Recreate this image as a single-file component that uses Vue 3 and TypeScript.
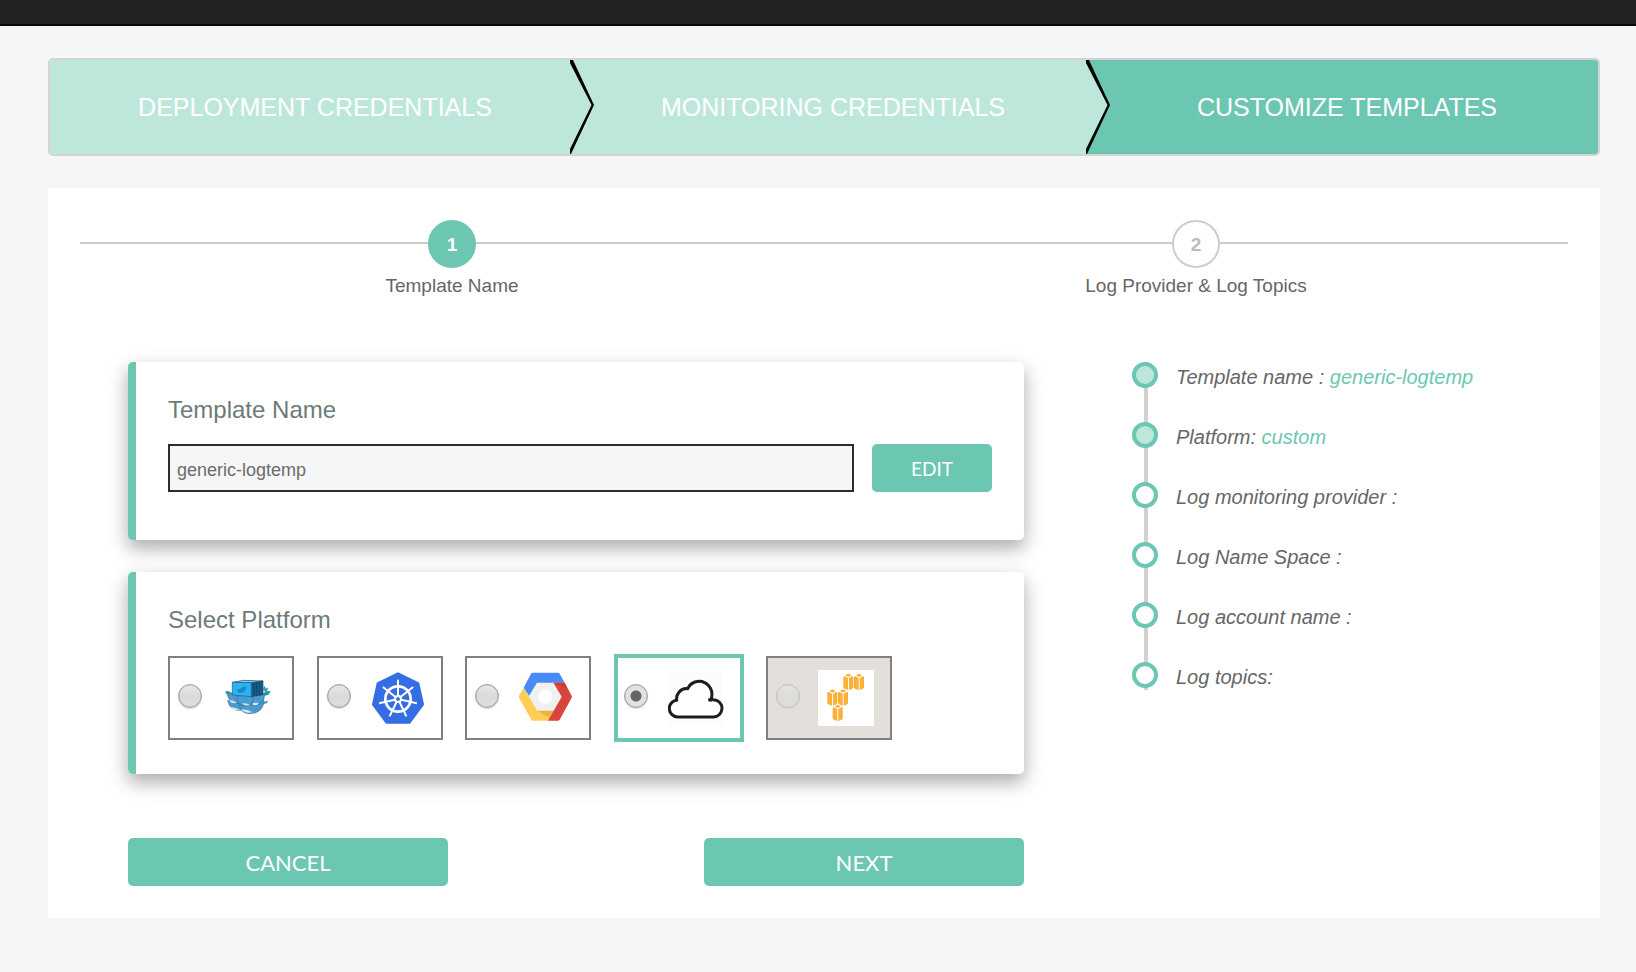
<script setup lang="ts">
import { computed, ref } from 'vue'

type PlatformId = 'swarm' | 'kubernetes' | 'gcp' | 'custom' | 'aws'

interface Platform {
  id: PlatformId
  label: string
  disabled?: boolean
}

const stages: string[] = ['Deployment Credentials', 'Monitoring Credentials', 'Customize Templates']
const activeStage = 2

const steps: string[] = ['Template Name', 'Log Provider & Log Topics']
const activeStep = ref(0)

const templateName = ref('generic-logtemp')
const editing = ref(false)

const platforms: Platform[] = [
  { id: 'swarm', label: 'Docker Swarm' },
  { id: 'kubernetes', label: 'Kubernetes' },
  { id: 'gcp', label: 'Google Cloud' },
  { id: 'custom', label: 'Custom' },
  { id: 'aws', label: 'AWS', disabled: true },
]
const platform = ref<PlatformId>('custom')

const spokes: number[] = Array.from({ length: 7 }, (_, i) => (i * 360) / 7)
const cubes: [number, number][] = [
  [325, 101],
  [357, 101],
  [277, 148],
  [309, 148],
  [293, 194],
]

const summary = computed(() => [
  { label: 'Template name :', value: templateName.value },
  { label: 'Platform:', value: platform.value },
  { label: 'Log monitoring provider :', value: '' },
  { label: 'Log Name Space :', value: '' },
  { label: 'Log account name :', value: '' },
  { label: 'Log topics:', value: '' },
])
</script>

<template>
  <div class="page">
    <header class="topbar"></header>
    <main class="main">
      <nav class="wizard" aria-label="Setup stages">
        <div v-for="(stage, i) in stages" :key="stage" class="stage" :class="{ active: i === activeStage }">
          <svg v-if="i > 0" class="chevron" viewBox="0 0 24 94" preserveAspectRatio="none" aria-hidden="true">
            <path class="chevron-fill" d="M0 0 L23 45 L0 94 Z" />
            <path d="M0 0 H3 L24 45 L1 94 H0 V89 L21.500 45 L0 3 Z" />
          </svg>
          <span>{{ stage }}</span>
        </div>
      </nav>

      <section class="panel">
        <ol class="stepper">
          <li v-for="(step, i) in steps" :key="step" :class="{ current: i === activeStep }">
            <span class="bullet">{{ i + 1 }}</span>
            <span class="step-label">{{ step }}</span>
          </li>
        </ol>

        <div class="content">
          <form class="form" @submit.prevent="activeStep = 1">
            <div class="card card-name">
              <label class="title" for="template-name">Template Name</label>
              <div class="name-row">
                <input id="template-name" v-model="templateName" type="text" :readonly="!editing" />
                <button type="button" class="button small" @click="editing = !editing">EDIT</button>
              </div>
            </div>

            <fieldset class="card">
              <legend class="title">Select Platform</legend>
              <div class="platforms">
                <label
                  v-for="p in platforms"
                  :key="p.id"
                  class="platform"
                  :class="{ selected: platform === p.id, disabled: p.disabled }"
                >
                  <input
                    v-model="platform"
                    type="radio"
                    name="platform"
                    :value="p.id"
                    :disabled="p.disabled"
                    :aria-label="p.label"
                  />

                  <svg v-if="p.id === 'swarm'" viewBox="210 90 168 168" aria-hidden="true">
                    <g stroke="#3b6f8f" stroke-width="2">
                      <path fill="#159fae" d="M226 154 q10 -3 18 4 v9 q-11 1 -16 -7z M361 154 q-10 -3 -19 4 v9 q13 0 17 -7z" stroke="none" />
                      <path fill="#3f95cc" d="M340 150 l3 -12 4 8 7 -3 -5 14 z M340 186 l13 -3 -3 6 -12 4z" stroke-width="1" />
                      <path fill="#4a9ad4" d="M233 182 q18 -8 42 2 v26 q-34 6 -42 -28z" />
                      <path fill="#d9e6ec" d="M238 200 q16 1 32 9 q-22 5 -32 -9z" stroke="none" />
                      <path fill="#4a9ad4" d="M268 194 q38 -20 74 -12 q-2 38 -44 39 q-26 -1 -30 -27z" />
                      <path fill="#d9e6ec" d="M274 208 q16 -1 34 9 q-24 5 -34 -9z" stroke="none" />
                      <path fill="#4a9ad4" d="M231 160 q22 -4 42 6 v24 q-36 5 -42 -30z" />
                      <path fill="#4a9ad4" d="M302 172 q22 -14 42 -12 q1 36 -38 38 l-8 -8z" />
                      <path fill="#4a9ad4" d="M260 170 q26 -12 50 2 q0 26 -27 26 q-21 -3 -23 -28z" />
                      <path fill="#d9e6ec" d="M237 180 q12 0 24 9 q-17 3 -24 -9z M277 190 q14 -2 23 5 q-17 5 -23 -5z M309 189 q12 -2 18 2 q-8 6 -18 4z" stroke="none" />
                    </g>
                    <path fill="#155f87" stroke="#1b4257" stroke-width="2" d="M304 128 L339 123 V164 L304 170z" />
                    <path fill="#7bd0f4" stroke="#1b4257" stroke-width="2" d="M247 127 L281 121 L339 123 L304 128z" />
                    <path fill="#2cb1f5" stroke="#1b5d83" stroke-width="2" d="M247 127 L304 128 V170 L247 165z" />
                    <path fill="none" stroke="#0a3e5e" stroke-width="2" d="M312 128 V168 M320 127 V167 M329 125 V165" />
                    <path fill="#1b8ac4" d="M261 149 q10 -2 17 -7 l2 -5 4 5 8 -1 q-4 4 -6 9 q-5 9 -15 8 q-9 -1 -10 -9z" />
                  </svg>

                  <svg v-else-if="p.id === 'kubernetes'" viewBox="657 90 168 168" aria-hidden="true">
                    <path
                      fill="#356de4"
                      stroke="#356de4"
                      stroke-width="8"
                      stroke-linejoin="round"
                      d="M744 101 L804 130 L818 193 L778 247 H710 L670 193 L684 130z"
                    />
                    <g fill="none" stroke="#fff">
                      <circle cx="744" cy="177" r="38" stroke-width="8" />
                      <path
                        v-for="a in spokes"
                        :key="a"
                        stroke-width="6"
                        d="M744 171 V119"
                        :transform="`rotate(${a} 744 177)`"
                      />
                      <circle cx="744" cy="177" r="9" stroke-width="6" />
                    </g>
                    <circle cx="744" cy="177" r="4" fill="#356de4" />
                  </svg>

                  <svg v-else-if="p.id === 'gcp'" viewBox="202 90 168 168" aria-hidden="true">
                    <path fill="#f0f0f0" d="M262 128 H311 L336 170 L312 212 H263 L238 168z" />
                    <path fill="#4a8af4" d="M222 143 L244 101 Q246 98 250 98 H324 Q328 98 330 101 L345 128 H262 L238 168z" />
                    <path fill="#ffcd55" d="M222 143 L208 167 Q206 170 208 173 L245 239 Q247 242 250 242 H295 L312 212 H263z" />
                    <path fill="#e9b53f" d="M263 212 H312 L300 234z" />
                    <path fill="#d8453c" d="M311 128 H345 L366 167 Q368 170 366 173 L330 239 Q328 242 324 242 H295 L336 170z" />
                    <path fill="#b93832" d="M311 128 H345 L353 143z" opacity=".6" />
                    <circle cx="287" cy="170" r="21" fill="#fff" />
                  </svg>

                  <svg v-else-if="p.id === 'custom'" viewBox="656 91 168 168" aria-hidden="true">
                    <path fill="#fcfcfc" d="M657 94 H819 V255 H657z" />
                    <path
                      fill="#fff"
                      stroke="#1d1d1b"
                      stroke-width="9"
                      d="M686 181 A25 25 0 0 0 685 232 H792 A25 25 0 0 0 792 180 H777 L784 181 A38 39 0 1 0 715 147 A30 30 0 0 0 683 185"
                    />
                  </svg>

                  <svg v-else viewBox="234 90 168 168" aria-hidden="true">
                    <path fill="#fff" d="M234 90 H402 V258 H234z" />
                    <g v-for="([x, y], i) in cubes" :key="i" :transform="`translate(${x} ${y})`" fill="#fbae34">
                      <path d="M-9 5 L0 0 L9 5 L0 10z" />
                      <path d="M-15 9 L-11 8 L-1 13 V49 L-12 45 L-15 41z" />
                      <path d="M15 9 L11 8 L2 13 V49 L12 45 L15 41z" />
                      <path fill="none" stroke="#fcc873" stroke-width="1" d="M-7 12 V46 M7 12 V46" />
                    </g>
                  </svg>
                </label>
              </div>
            </fieldset>

            <div class="actions">
              <button type="button" class="button">CANCEL</button>
              <button type="submit" class="button">NEXT</button>
            </div>
          </form>

          <ul class="summary">
            <li v-for="item in summary" :key="item.label" :class="{ done: item.value }">
              <i class="dot"></i>
              <span>{{ item.label }} <em v-if="item.value">{{ item.value }}</em></span>
            </li>
          </ul>
        </div>
      </section>
    </main>
  </div>
</template>

<style>
html,
body {
  background: #f4f6f8;
}
body {
  margin: 0;
}
</style>

<style scoped>
.page {
  --teal: #6cc7b2;
  --mint: #bee7dc;
  --line: #ccc;
  min-height: 100vh;
  background: #f4f6f8;
  color: #666;
  font-family: "Liberation Sans", Arial, sans-serif;
}
.page,
.page * {
  box-sizing: border-box;
}
.topbar {
  height: 26px;
  background: #222;
  border-bottom: 2px solid #090909;
}
.main {
  padding: 32px 36px 54px 48px;
}

.wizard {
  display: grid;
  grid-template-columns: 130fr 129fr 128fr;
  height: 98px;
  border: 2px solid #d3d3d3;
  border-radius: 5px;
  overflow: hidden;
}
.stage {
  position: relative;
  display: flex;
  align-items: center;
  justify-content: center;
  padding-left: 10px;
  background: var(--mint);
  color: #fff;
  font-size: 25px;
  line-height: 32px;
  text-transform: uppercase;
  white-space: nowrap;
}
.stage.active {
  background: var(--teal);
}
.chevron {
  position: absolute;
  left: 0;
  top: 0;
  width: 24px;
  height: 100%;
}
.chevron-fill {
  fill: var(--mint);
}

.panel {
  margin-top: 32px;
  padding: 32px;
  background: #fff;
}
.stepper {
  display: flex;
  margin: 0;
  padding: 0;
  list-style: none;
  background: linear-gradient(var(--line), var(--line)) 0 22px / 100% 2px no-repeat;
}
.stepper li {
  flex: 1;
  display: flex;
  flex-direction: column;
  align-items: center;
  gap: 4px;
}
.bullet {
  width: 48px;
  height: 48px;
  border: 2px solid var(--line);
  border-radius: 50%;
  background: #fff;
  color: #bbb;
  font-size: 19px;
  font-weight: bold;
  line-height: 46px;
  text-align: center;
}
.current .bullet {
  border-color: var(--teal);
  background: var(--teal);
  color: #fff;
}
.step-label {
  font-size: 19px;
  line-height: 28px;
}

.content {
  display: grid;
  grid-template-columns: 896fr 436fr;
  column-gap: 108px;
  margin-top: 62px;
  padding-left: 48px;
}
.form {
  display: flex;
  flex-direction: column;
  min-width: 0;
}
.card {
  min-width: 0;
  margin: 0 0 32px;
  padding: 32px;
  border: 0;
  border-left: 8px solid var(--teal);
  border-radius: 5px;
  background: #fff;
  box-shadow: 0 8px 16px rgba(0, 0, 0, 0.2), 0 8px 24px rgba(0, 0, 0, 0.16);
}
.card-name {
  padding-bottom: 48px;
}
.title {
  display: block;
  float: left;
  width: 100%;
  margin-bottom: 18px;
  padding: 0;
  color: #6c7b79;
  font-size: 24px;
  line-height: 32px;
}
.name-row {
  clear: both;
  display: flex;
  gap: 18px;
}
.name-row input {
  flex: 1;
  min-width: 0;
  height: 48px;
  padding: 4px 7px 0;
  border: 2px solid #322c2e;
  border-radius: 0;
  outline: 0;
  background: #f4f6f8;
  color: #6f6a6a;
  font: 18px "Liberation Sans", Arial, sans-serif;
}
.button {
  width: 320px;
  height: 48px;
  padding: 0;
  border: 0;
  border-radius: 5px;
  background: var(--teal);
  color: #fff;
  font: 22px Lato, sans-serif;
  cursor: pointer;
}
.button.small {
  width: 120px;
  font-size: 19px;
}
.platforms {
  clear: both;
  display: flex;
  align-items: center;
  justify-content: space-between;
  max-width: 724px;
  height: 88px;
}
.platform {
  display: flex;
  align-items: center;
  justify-content: space-between;
  width: 126px;
  height: 84px;
  padding: 0 16px 0 8px;
  border: 2px solid #83807b;
}
.platform.selected {
  width: 130px;
  height: 88px;
  padding-left: 6px;
  border: 4px solid var(--teal);
}
.platform.disabled {
  background: #e3e0db;
}
.platform input {
  appearance: none;
  width: 24px;
  height: 24px;
  margin: 0 0 4px;
  border: 1px solid #a0a0a0;
  border-radius: 50%;
  background: linear-gradient(#e8e8e8, #dadada 50%, #dedede);
  box-shadow: 0 1px 1px rgba(0, 0, 0, 0.15), inset 0 0 1px #888;
}
.platform input:checked {
  background: radial-gradient(circle, #666 5px, #e2e2e2 6px);
}
.platform input:disabled {
  opacity: 0.45;
}
.platform svg {
  width: 56px;
  height: 56px;
}
.actions {
  display: flex;
  justify-content: space-between;
  margin-top: 32px;
}

.summary {
  margin: 0;
  padding: 0;
  list-style: none;
  font-size: 20px;
  font-style: italic;
  line-height: 30px;
}
.summary li {
  display: flex;
  gap: 18px;
  height: 60px;
  background: linear-gradient(#d3d0d0, #d3d0d0) 12px 0 / 4px 100% no-repeat;
}
.summary li:last-child {
  height: 30px;
  background-size: 4px 28px;
}
.dot {
  flex: none;
  width: 26px;
  height: 26px;
  border: 4px solid var(--teal);
  border-radius: 50%;
  background: #fff;
}
.done .dot {
  background: var(--mint);
}
.summary em {
  color: var(--teal);
}
</style>
